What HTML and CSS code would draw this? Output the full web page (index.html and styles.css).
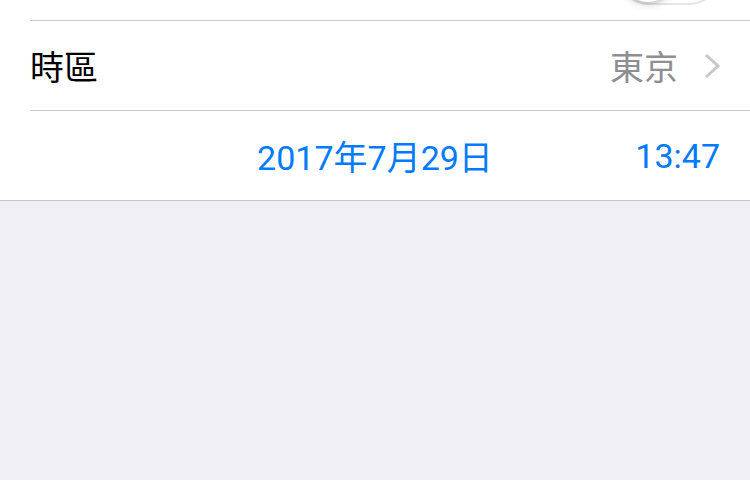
FILE: index.html
```html
<!DOCTYPE html>
<html lang="zh-Hant">
<head>
    <meta charset="UTF-8">
    <meta name="viewport" content="width=device-width, initial-scale=1.0">
    <title>日期與時間</title>
    <link rel="stylesheet" href="styles.css">
</head>
<body>
    <div class="group">
        <div class="cell">
            <div class="cell-inner cell-switch">
                <div class="switch">
                    <div class="knob"></div>
                </div>
            </div>
        </div>
        <div class="cell">
            <div class="cell-inner">
                <span class="label">時區</span>
                <span class="detail">東京</span>
                <svg class="chevron" width="16" height="26" viewBox="0 0 16 26">
                    <polyline points="2,2 14,13 2,24" fill="none" stroke="#c7c7cc" stroke-width="3"/>
                </svg>
            </div>
        </div>
        <div class="cell">
            <div class="cell-inner cell-date">
                <span></span>
                <span class="date">2017年7月29日</span>
                <span class="time">13:47</span>
            </div>
        </div>
    </div>
</body>
</html>
```

FILE: styles.css
```css
body {
    margin: 0;
    background-color: #efeff4;
    font-family: Roboto, "Noto Sans CJK TC", sans-serif;
    font-size: 34px;
    color: #000000;
}

.group {
    background-color: #ffffff;
    border-bottom: 1px solid #c8c7cc;
}

.cell-inner {
    margin-left: 30px;
    padding-right: 30px;
    height: 89px;
    display: flex;
    align-items: center;
    border-bottom: 1px solid #c8c7cc;
}

.cell:last-child .cell-inner {
    border-bottom: none;
}

.cell-switch {
    height: 20px;
    overflow: hidden;
    justify-content: flex-end;
    align-items: flex-end;
}

.switch {
    position: relative;
    flex-shrink: 0;
    width: 102px;
    height: 62px;
    margin-bottom: 15px;
    box-sizing: border-box;
    border: 2px solid #e5e5ea;
    border-radius: 31px;
    background-color: #ffffff;
}

.knob {
    position: absolute;
    left: 0;
    top: 1px;
    width: 56px;
    height: 56px;
    border-radius: 50%;
    background-color: #ffffff;
    box-shadow: 0 3px 8px rgba(0, 0, 0, 0.15), 0 3px 1px rgba(0, 0, 0, 0.06), 0 0 0 0.5px rgba(0, 0, 0, 0.04);
}

.label {
    flex: 1;
}

.detail {
    color: #8e8e93;
    margin-right: 26px;
}

.chevron {
    display: block;
}

.cell-date {
    display: grid;
    grid-template-columns: 1fr auto 1fr;
    color: #007aff;
}

.time {
    text-align: right;
}
```
